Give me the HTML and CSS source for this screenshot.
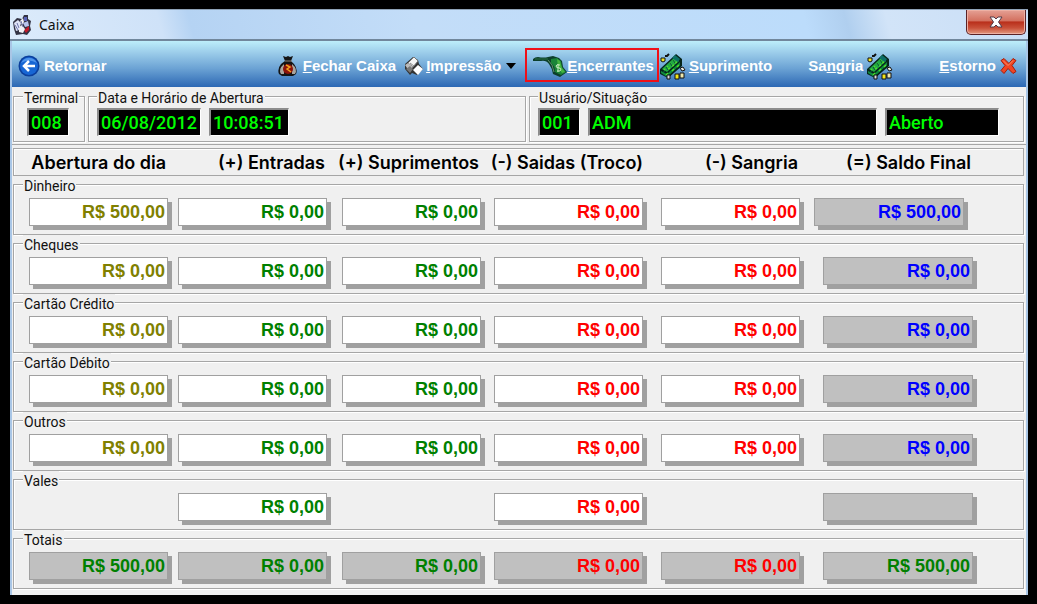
FILE: index.html
```html
<!DOCTYPE html>
<html lang="pt-BR">
<head>
<meta charset="utf-8">
<title>Caixa</title>
<link rel="stylesheet" href="styles.css">
</head>
<body>
<svg class="defs" aria-hidden="true">
  <symbol id="money" viewBox="0 0 27 27">
    <path d="M1 16 15 3l2-2 6 5v7L9 25l-8-4z" fill="#06251a"/>
    <path d="M3 16 16 4l4 4L8 19z" fill="#22a845"/>
    <path d="m2 18 6 3 13-12v3L8 24l-6-4z" fill="#0f8a3c"/>
    <path d="m13 5 3-3 5 4-2 3z" fill="#0c6f66"/>
    <path d="m5 16 1 1m2-4 1 1m0 2 2-1m0-5 1 1m1 2 2-1m-1-5 1 1m1 2 2-1M7 22l2-2m4-2 2-2m3-2 2-2" stroke="#4fe02a" stroke-width="1.500"/>
    <path d="m4 18 2 1m1-5 2 3m2-7 2 3m1-6 2 3" stroke="#0a5238"/>
    <path d="M2 5h4v3l-2 1-2-1z" fill="#f5e71b" stroke="#111"/>
    <path d="M6 3h2l2-2" fill="none" stroke="#111" stroke-width="2"/>
    <path d="M16 21h4v5h-4z" fill="#f5e71b" stroke="#111"/>
    <path d="M8 22h3v4H8z" fill="#ddd" stroke="#111"/>
    <path d="M21 20h4v5h-4z" fill="#efe9b0" stroke="#111"/>
    <path d="m21 15 3-1 2 3-3 1z" fill="#e8e8df" stroke="#111"/>
  </symbol>
</svg>
<main class="window">
  <header class="titlebar">
    <svg class="app-icon" viewBox="0 0 20 20" aria-hidden="true">
      <path d="m1 7 4-4 5 1 2-4h4v4l3 2-1 5 1 4-4 5-4-1-7 1-2-6z" fill="#334" />
      <path d="m2 8 4-3 3 3-2 7-3 1z" fill="#dfe4f7"/><path d="m8 6 3-3 1 4-2 3z" fill="#f5f5f8"/>
      <path d="M12 2h3v4h-3z" fill="#5963b8"/><path d="m11 8 5-2 1 5-4 1z" fill="#b9c4ec"/>
      <path d="m12 15 5-4v4l-3 3z" fill="#c21928"/><path d="m7 12 3-2 3 4-2 4-4-1z" fill="#f1f1f5"/>
      <path d="m3 10 3 5m3-9 2 6M5 8l2 5" stroke="#7076ab"/>
    </svg>
    <h1 class="title">Caixa</h1>
    <button class="close" type="button" aria-label="Fechar">
      <svg viewBox="0 0 14 12" aria-hidden="true"><path d="M1 1h4l2 2 2-2h4L9.500 6 13 11H9L7 9l-2 2H1l3.500-5z" fill="#fff" stroke="#513a48" stroke-width="1"/></svg>
    </button>
  </header>

  <nav class="toolbar">
    <button type="button" class="tool back">
      <svg class="i22" viewBox="0 0 22 22" aria-hidden="true"><circle cx="11" cy="11" r="10.500" fill="#0b3f9c"/><circle cx="11" cy="11" r="9" fill="#1766d4"/><path d="M3 8a9 9 0 0 1 16 0q-8-5-16 0z" fill="#4f94ea"/><path d="M17 11H6m5-5-5 5 5 5" fill="none" stroke="#fff" stroke-width="2.500"/></svg>
      <span>Retornar</span>
    </button>
    <button type="button" class="tool closing">
      <svg class="i20" viewBox="0 0 20 22" aria-hidden="true"><path d="m5 1 3 1 2-1 2 1 3-1-2 5 3 3q4 5 2 10l-3 2H4l-3-2q-2-5 2-10l4-3z" fill="#141414"/><path d="M6 9q-6 5-3 10h3zM14 9q6 5 3 10h-3z" fill="#a9a49d"/><circle cx="10" cy="14" r="5" fill="#8c1309"/><path d="m8 10 4 2-3 2 4 3" fill="none" stroke="#f2a01c" stroke-width="1.500"/><path d="M7 6h7" stroke="#8b837a"/></svg>
      <span><u>F</u>echar Caixa</span>
    </button>
    <button type="button" class="tool print">
      <svg class="i20" viewBox="0 0 20 20" aria-hidden="true"><path d="m1 8 8-7 5 3 1 4 4 5-6 6-5-2-2 2-5-6z" fill="#333"/><path d="m4 7 6-6 4 4-5 6z" fill="#f4f4f4" stroke="#777"/><path d="m1 9 3-2 5 4-4 4z" fill="#bcbcbc"/><path d="m2 13 4 4 3-4-3-3z" fill="#777"/><path d="m9 14 5-5 5 4-5 6z" fill="#fff"/><path d="m6 7 4 3" stroke="#888"/></svg>
      <span><u>I</u>mpressão</span>
      <svg class="caret" viewBox="0 0 10 6" aria-hidden="true"><path d="M0 0h10L5 6z" fill="#000"/></svg>
    </button>
    <button type="button" class="tool meters">
      <svg class="i34" viewBox="0 0 34 22" aria-hidden="true"><path d="M0 4q2-2 5-2 6 1 10 0l5-1 6 2 3 3 1 6 4 5-7 5-7-3q-1-6-4-10Q13 5 8 6H0z" fill="#0c3f2b"/><path d="m18 4 6-1 4 3 1 6 4 5-5 3-6-3q0-6-4-9z" fill="#1a8438"/><path d="m24 4 3 2 2 7 3 4-3 1-4-6z" fill="#45b540"/><path d="M15 5q5 4 6 12" fill="none" stroke="#5f8f68"/><path d="M2 4q6 0 13 0" fill="none" stroke="#2a7047"/><path d="M27 10q-4-1-4 1t3 2 1 3h-3m1-7v8" fill="none" stroke="#c9eec0"/></svg>
      <span><u>E</u>ncerrantes</span>
    </button>
    <button type="button" class="tool supply">
      <svg class="i27" aria-hidden="true"><use href="#money"/></svg>
      <span><u>S</u>uprimento</span>
    </button>
    <button type="button" class="tool bleed">
      <span>Sa<u>n</u>gria</span>
      <svg class="i27" aria-hidden="true"><use href="#money"/></svg>
    </button>
    <button type="button" class="tool reverse">
      <span><u>E</u>storno</span>
      <svg class="i17" viewBox="0 0 17 17" aria-hidden="true"><path d="m1 3 3-2 5 5 4-5 3 2-4 5 4 6-3 2-5-5-4 5-3-3 4-5z" fill="#f04524" stroke="#a51d0a"/><path d="m3 3 5 5 5-5" fill="none" stroke="#ff9166"/></svg>
    </button>
  </nav>

  <section class="info">
    <fieldset class="group terminal">
      <legend id="l-term">Terminal</legend>
      <div class="displays"><input class="lcd w-code" readonly value="008" aria-labelledby="l-term"></div>
    </fieldset>
    <fieldset class="group opening">
      <legend id="l-open">Data e Horário de Abertura</legend>
      <div class="displays">
        <input class="lcd w-date" readonly value="06/08/2012" aria-labelledby="l-open">
        <input class="lcd w-time" readonly value="10:08:51" aria-labelledby="l-open">
      </div>
    </fieldset>
    <fieldset class="group user">
      <legend id="l-user">Usuário/Situação</legend>
      <div class="displays">
        <input class="lcd w-code" readonly value="001" aria-labelledby="l-user">
        <input class="lcd w-name" readonly value="ADM" aria-labelledby="l-user">
        <input class="lcd w-state" readonly value="Aberto" aria-labelledby="l-user">
      </div>
    </fieldset>
  </section>

  <section class="ledger">
    <div class="heads columns">
      <span class="c1" id="h1">Abertura do dia</span>
      <span class="c2" id="h2">(+) Entradas</span>
      <span class="c3" id="h3">(+) Suprimentos</span>
      <span class="c4" id="h4">(-) Saidas (Troco)</span>
      <span class="c5" id="h5">(-) Sangria</span>
      <span class="c6" id="h6">(=) Saldo Final</span>
    </div>
    <fieldset class="group">
      <legend id="r1">Dinheiro</legend>
      <div class="columns">
        <input class="amount c1 olive" readonly value="R$ 500,00" aria-labelledby="r1 h1">
        <input class="amount c2 green" readonly value="R$ 0,00" aria-labelledby="r1 h2">
        <input class="amount c3 green" readonly value="R$ 0,00" aria-labelledby="r1 h3">
        <input class="amount c4 red" readonly value="R$ 0,00" aria-labelledby="r1 h4">
        <input class="amount c5 red" readonly value="R$ 0,00" aria-labelledby="r1 h5">
        <input class="amount c6 blue sum cash" readonly value="R$ 500,00" aria-labelledby="r1 h6">
      </div>
    </fieldset>
    <fieldset class="group">
      <legend id="r2">Cheques</legend>
      <div class="columns">
        <input class="amount c1 olive" readonly value="R$ 0,00" aria-labelledby="r2 h1">
        <input class="amount c2 green" readonly value="R$ 0,00" aria-labelledby="r2 h2">
        <input class="amount c3 green" readonly value="R$ 0,00" aria-labelledby="r2 h3">
        <input class="amount c4 red" readonly value="R$ 0,00" aria-labelledby="r2 h4">
        <input class="amount c5 red" readonly value="R$ 0,00" aria-labelledby="r2 h5">
        <input class="amount c6 blue sum" readonly value="R$ 0,00" aria-labelledby="r2 h6">
      </div>
    </fieldset>
    <fieldset class="group">
      <legend id="r3">Cartão Crédito</legend>
      <div class="columns">
        <input class="amount c1 olive" readonly value="R$ 0,00" aria-labelledby="r3 h1">
        <input class="amount c2 green" readonly value="R$ 0,00" aria-labelledby="r3 h2">
        <input class="amount c3 green" readonly value="R$ 0,00" aria-labelledby="r3 h3">
        <input class="amount c4 red" readonly value="R$ 0,00" aria-labelledby="r3 h4">
        <input class="amount c5 red" readonly value="R$ 0,00" aria-labelledby="r3 h5">
        <input class="amount c6 blue sum" readonly value="R$ 0,00" aria-labelledby="r3 h6">
      </div>
    </fieldset>
    <fieldset class="group">
      <legend id="r4">Cartão Débito</legend>
      <div class="columns">
        <input class="amount c1 olive" readonly value="R$ 0,00" aria-labelledby="r4 h1">
        <input class="amount c2 green" readonly value="R$ 0,00" aria-labelledby="r4 h2">
        <input class="amount c3 green" readonly value="R$ 0,00" aria-labelledby="r4 h3">
        <input class="amount c4 red" readonly value="R$ 0,00" aria-labelledby="r4 h4">
        <input class="amount c5 red" readonly value="R$ 0,00" aria-labelledby="r4 h5">
        <input class="amount c6 blue sum" readonly value="R$ 0,00" aria-labelledby="r4 h6">
      </div>
    </fieldset>
    <fieldset class="group">
      <legend id="r5">Outros</legend>
      <div class="columns">
        <input class="amount c1 olive" readonly value="R$ 0,00" aria-labelledby="r5 h1">
        <input class="amount c2 green" readonly value="R$ 0,00" aria-labelledby="r5 h2">
        <input class="amount c3 green" readonly value="R$ 0,00" aria-labelledby="r5 h3">
        <input class="amount c4 red" readonly value="R$ 0,00" aria-labelledby="r5 h4">
        <input class="amount c5 red" readonly value="R$ 0,00" aria-labelledby="r5 h5">
        <input class="amount c6 blue sum" readonly value="R$ 0,00" aria-labelledby="r5 h6">
      </div>
    </fieldset>
    <fieldset class="group">
      <legend id="r6">Vales</legend>
      <div class="columns">
        <input class="amount c2 green" readonly value="R$ 0,00" aria-labelledby="r6 h2">
        <input class="amount c4 red" readonly value="R$ 0,00" aria-labelledby="r6 h4">
        <input class="amount c6 blue sum" readonly value="" aria-labelledby="r6 h6">
      </div>
    </fieldset>
    <fieldset class="group">
      <legend id="r7">Totais</legend>
      <div class="columns">
        <input class="amount c1 green sum" readonly value="R$ 500,00" aria-labelledby="r7 h1">
        <input class="amount c2 green sum" readonly value="R$ 0,00" aria-labelledby="r7 h2">
        <input class="amount c3 green sum" readonly value="R$ 0,00" aria-labelledby="r7 h3">
        <input class="amount c4 red sum" readonly value="R$ 0,00" aria-labelledby="r7 h4">
        <input class="amount c5 red sum" readonly value="R$ 0,00" aria-labelledby="r7 h5">
        <input class="amount c6 green sum" readonly value="R$ 500,00" aria-labelledby="r7 h6">
      </div>
    </fieldset>
  </section>
</main>
</body>
</html>
```

FILE: styles.css
```css
* { box-sizing: border-box; }
body {
  margin: 0;
  padding: 9px 9px 9px 10px;
  background: #000;
  font-family: "Liberation Sans", Arial, sans-serif;
}
.defs { position: absolute; width: 0; height: 0; }
.window {
  background: #f0f0f0;
  border: solid #a9c6e6;
  border-width: 0 2px;
  padding-bottom: 6px;
}

/* Title bar */
.titlebar {
  display: flex;
  align-items: center;
  height: 32px;
  margin: 0 -2px;
  padding-left: 2px;
  border-top: 1px solid #8fa3b8;
  border-bottom: 2px solid #71879c;
  background: linear-gradient(75deg, #dcebfb 0%, #cfe2f8 15%, #b5d3f3 18%, #c3ddf8 40%, #bcdcfb 78%, #b0cfef 82%, #d2e4f8 86%, #c9def6 100%);
}
.app-icon { width: 20px; height: 20px; }
.title {
  flex: 1;
  margin: 0 0 0 7px;
  font: 400 14px/20px "Noto Sans", sans-serif;
  color: #111;
}
.close {
  display: grid;
  place-items: center;
  align-self: flex-start;
  width: 60px;
  height: 25px;
  margin-right: 2px;
  padding: 0 0 1px;
  border: 1px solid #5a2226;
  border-top: 0;
  border-radius: 0 0 5px 5px;
  box-shadow: inset 0 0 0 1px #eeb0a3;
  background: linear-gradient(#e5a195 0, #d3705f 45%, #b92f1b 50%, #c9513a 75%, #e39a80 100%);
}
.close svg { width: 14px; height: 12px; }

/* Toolbar */
.toolbar {
  display: flex;
  align-items: center;
  height: 46px;
  padding: 2px 9px 0 6px;
  background: linear-gradient(#bdeefb 0, #9ccdea 25%, #6ba2d4 60%, #2c68b4 100%);
}
.tool {
  display: flex;
  align-items: center;
  flex: none;
  padding: 2px 0 0;
  border: 0;
  background: none;
  color: #fff;
  font: 700 15px/20px "Liberation Sans", Arial, sans-serif;
  white-space: nowrap;
}
.tool svg { flex: none; }
.i22 { width: 22px; height: 22px; }
.i20 { width: 20px; height: 22px; }
.i34 { width: 34px; height: 22px; }
.i27 { width: 27px; height: 27px; }
.i17 { width: 17px; height: 18px; }
.caret { width: 10px; height: 6px; }
.back { gap: 4px; margin-right: auto; }
.closing { gap: 5px; margin-right: 8px; }
.print { gap: 2px; margin-right: 9px; }
.print .caret { margin-left: 3px; }
.meters {
  height: 34px;
  padding: 1px 3px 0 6px;
  border: 2px solid #f01018;
}
.supply { gap: 3px; margin-right: 36px; }
.bleed { gap: 3px; margin-right: 46px; }
.reverse { gap: 4px; }

/* Framed groups */
.group {
  min-width: 0;
  margin: 0;
  padding: 5px 0 8px 15px;
  border: 1px solid #a6a6a6;
  box-shadow: 1px 1px #fff, inset 1px 1px #fff;
}
.group legend {
  margin-left: -6px;
  padding: 3px 1px 0;
  background: #f0f0f0;
  color: #111;
  font: 400 14px/14px Roboto, sans-serif;
}
.info {
  display: flex;
  gap: 3px;
  padding: 1px 2px 2px 1px;
  border-bottom: 1px solid #a6a6a6;
}
.info .group { padding: 3px 8px 5px; }
.info legend { margin-left: 0; }
.info .terminal { flex: none; padding: 3px 15px 5px 13px; }
.info .terminal legend { margin: 0 -12px 0 -4px; }
.info .opening { flex: 452 1 0; }
.info .user { flex: 496 1 0; padding-right: 24px; }
.displays { display: flex; gap: 8px; }
.lcd {
  min-width: 0;
  height: 28px;
  padding: 0 2px;
  border: solid;
  border-width: 2px 1px 1px 2px;
  border-color: #8c8c8c #fff #fff #8c8c8c;
  border-radius: 0;
  background: #000;
  color: #0f0;
  font: 500 18px/24px Roboto, sans-serif;
}
.w-code { width: 42px; }
.w-date { width: 104px; }
.w-time { width: 80px; }
.w-name { flex: 1; }
.w-state { width: 114px; }

/* Amounts */
.ledger { padding: 3px 2px 0 1px; }
.columns {
  display: grid;
  grid-template-columns: 149fr 164fr 152fr 167fr 162fr 200fr;
}
.columns > * { grid-row: 1; min-width: 0; }
.c1 { grid-column: 1; margin-right: 10px; }
.c2 { grid-column: 2; margin-right: 15px; }
.c3 { grid-column: 3; margin-right: 13px; }
.c4 { grid-column: 4; margin-right: 18px; }
.c5 { grid-column: 5; margin-right: 23px; }
.c6 { grid-column: 6; margin-right: 50px; }
.heads {
  height: 28px;
  padding-left: 15px;
  border: 1px solid #a6a6a6;
  box-shadow: inset 1px 1px #fff;
  color: #000;
  font: 600 18px/28px Inter, sans-serif;
}
.heads span {
  display: flex;
  justify-content: flex-end;
  padding-right: 2px;
  white-space: nowrap;
}
.heads .c4 { padding: 0; }
.amount {
  height: 28px;
  padding: 0 2px;
  border: 1px solid #a0a0a0;
  border-radius: 0;
  box-shadow: 4px 4px #a0a0a0;
  background: #fff;
  font: 700 18px/24px "Liberation Sans", Arial, sans-serif;
  text-align: right;
}
.sum { background: #c0c0c0; }
.cash { margin-left: -9px; margin-right: 59px; }
.olive { color: #808000; }
.green { color: #008000; }
.red { color: #f00; }
.blue { color: #00f; }
```
